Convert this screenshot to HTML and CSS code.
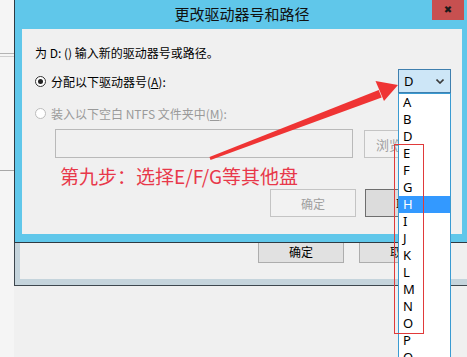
FILE: index.html
```html
<!DOCTYPE html>
<html lang="zh-CN">
<head>
  <meta charset="UTF-8">
  <title>更改驱动器号和路径</title>
  <link rel="stylesheet" href="styles.css">
</head>
<body>
  <div class="desk-left">
    <div class="rule rule-a"></div>
    <div class="rule rule-b"></div>
    <div class="rule rule-c"></div>
  </div>

  <!-- 后面的窗口，只露出底部 -->
  <div class="back-window">
    <div class="back-body">
      <button class="btn">确定</button>
      <button class="btn">取消</button>
    </div>
  </div>

  <div class="dialog">
    <div class="titlebar">更改驱动器号和路径</div>
    <div class="close">&#x2716;</div>
    <div class="dialog-body">
      <p class="prompt">为 D: () 输入新的驱动器号或路径。</p>

      <div class="row row-letter">
        <span class="radio checked"></span>
        <span class="label">分配以下驱动器号(<u>A</u>):</span>
        <div class="combo">
          <span>D</span>
          <svg width="8" height="5" viewBox="0 0 8 5"><path d="M0.5 0.5 L4 4 L7.5 0.5" fill="none" stroke="#3c3c3c" stroke-width="1.6"/></svg>
        </div>
      </div>

      <div class="row row-folder disabled">
        <span class="radio"></span>
        <span class="label">装入以下空白 NTFS 文件夹中(<u>M</u>):</span>
      </div>

      <div class="path-row">
        <div class="path-input"></div>
        <button class="btn btn-off btn-browse">浏览(R)...</button>
      </div>

      <div class="actions">
        <button class="btn btn-off">确定</button>
        <button class="btn btn-focus">取消</button>
      </div>
    </div>
  </div>

  <ul class="drive-list">
    <li>A</li>
    <li>B</li>
    <li>D</li>
    <li>E</li>
    <li>F</li>
    <li>G</li>
    <li class="active">H</li>
    <li>I</li>
    <li>J</li>
    <li>K</li>
    <li>L</li>
    <li>M</li>
    <li>N</li>
    <li>O</li>
    <li>P</li>
    <li>Q</li>
  </ul>

  <!-- 教程标注 -->
  <div class="mark-box"></div>
  <div class="note">第九步：选择E/F/G等其他盘</div>
  <svg class="arrow" width="467" height="357" viewBox="0 0 467 357">
    <polygon fill="#ef3434" points="210.5,160 209.5,157 378.7,90 381.7,97.5"/>
    <polygon fill="#ef3434" points="398,85 384,101 375.5,81"/>
  </svg>
</body>
</html>
```

FILE: styles.css
```css
body {
  margin: 0;
  width: 467px;
  height: 357px;
  overflow: hidden;
  position: relative;
  background: #f0f0f0;
  font-family: "Noto Sans CJK SC", "Noto Sans", sans-serif;
  font-size: 12px;
  color: #000;
}
.desk-left {
  position: absolute;
  left: 0;
  top: 0;
  width: 14px;
  height: 357px;
  background: #f5f5f5;
}
.rule {
  height: 1px;
  background: #b4b4b4;
}
.rule-a {
  margin-top: 53px;
}
.rule-b {
  margin-top: 2px;
  background: #cfcfcf;
}
.rule-c {
  margin-top: 113px;
  background: #a8a8a8;
}
.back-window {
  position: absolute;
  left: 14px;
  top: 200px;
  width: 470px;
  height: 86px;
  box-sizing: border-box;
  border: 1px solid #3e474e;
  background: #c5d4dc;
  padding: 0 6px 6px 5px;
}
.back-body {
  height: 100%;
  background: #f0f0f0;
  display: flex;
  align-items: flex-end;
  gap: 15px;
  padding: 0 0 16px 238px;
  box-sizing: border-box;
}
.btn {
  width: 86px;
  height: 24px;
  padding: 0;
  border: 1px solid #adadad;
  background: #e1e1e1;
  font-family: "Noto Sans CJK SC", sans-serif;
  font-size: 12px;
  color: #000;
}
.dialog {
  position: absolute;
  left: 14px;
  top: -1px;
  width: 456px;
  height: 244px;
  box-sizing: border-box;
  border: 1px solid #2f3a42;
  background: #60c7ea;
  padding: 0 7px 8px 7px;
}
.titlebar {
  height: 29px;
  line-height: 28px;
  text-align: center;
  font-size: 15px;
  color: #111;
}
.close {
  position: absolute;
  top: 0;
  right: 5px;
  width: 32px;
  height: 20px;
  background: #c75050;
  color: #1a1a1a;
  font-size: 10px;
  line-height: 20px;
  text-align: center;
  font-family: "DejaVu Sans", sans-serif;
  font-weight: bold;
}
.dialog-body {
  height: 205px;
  background: #f0f0f0;
  overflow: hidden;
}
.prompt {
  margin: 0;
  padding: 16px 0 0 13px;
  line-height: 16px;
}
.row {
  display: flex;
  align-items: center;
  padding-left: 13px;
}
.row-letter {
  height: 24px;
  margin-top: 8px;
}
.row-folder {
  height: 16px;
  margin-top: 12px;
}
.radio {
  width: 11px;
  height: 11px;
  box-sizing: border-box;
  border: 1px solid #333;
  border-radius: 50%;
  background: #fff;
  display: flex;
  align-items: center;
  justify-content: center;
  margin-right: 5px;
}
.radio.checked::after {
  content: "";
  width: 5px;
  height: 5px;
  border-radius: 50%;
  background: #222;
}
.disabled .radio {
  border-color: #bcbcbc;
}
.disabled .label {
  color: #9a9a9a;
}
.combo {
  margin-left: auto;
  margin-right: 11px;
  width: 53px;
  height: 24px;
  box-sizing: border-box;
  border: 1px solid #3f7fae;
  background: #cde6f7;
  display: flex;
  align-items: center;
  justify-content: space-between;
  padding: 0 6px 0 5px;
  font-family: "Noto Sans", sans-serif;
  font-size: 13px;
}
.path-row {
  display: flex;
  gap: 11px;
  margin-top: 8px;
  padding-left: 33px;
}
.path-input {
  width: 298px;
  height: 29px;
  box-sizing: border-box;
  border: 1px solid #b9b9b9;
  background: #f0f0f0;
}
.btn-off {
  height: 28px;
  margin-top: 1px;
  border-color: #c4c4c4;
  background: #f2f2f2;
  color: #a0a0a0;
}
.btn-browse {
  text-align: left;
  padding-left: 11px;
  font-size: 13px;
}
.actions {
  display: flex;
  gap: 9px;
  margin-top: 31px;
  padding-left: 248px;
}
.actions .btn-off {
  margin-top: 0;
}
.btn-focus {
  height: 28px;
  border-color: #6e6e6e;
  background: #dcdcdc;
}
.drive-list {
  position: absolute;
  left: 398px;
  top: 93px;
  width: 53px;
  margin: 0;
  padding: 0;
  list-style: none;
  box-sizing: border-box;
  border: 1px solid #3a9bd2;
  background: #fff;
  font-family: "Noto Sans", sans-serif;
  font-size: 13px;
}
.drive-list li {
  height: 17px;
  line-height: 17px;
  padding-left: 4px;
}
.drive-list .active {
  background: #3399ff;
  color: #fff;
}
.mark-box {
  position: absolute;
  left: 394px;
  top: 144px;
  width: 30px;
  height: 190px;
  box-sizing: border-box;
  border: 1px solid #e03a3a;
}
.note {
  position: absolute;
  left: 60px;
  top: 165px;
  font-size: 19px;
  line-height: 22px;
  color: #e8384a;
}
.arrow {
  position: absolute;
  left: 0;
  top: 0;
}
```
